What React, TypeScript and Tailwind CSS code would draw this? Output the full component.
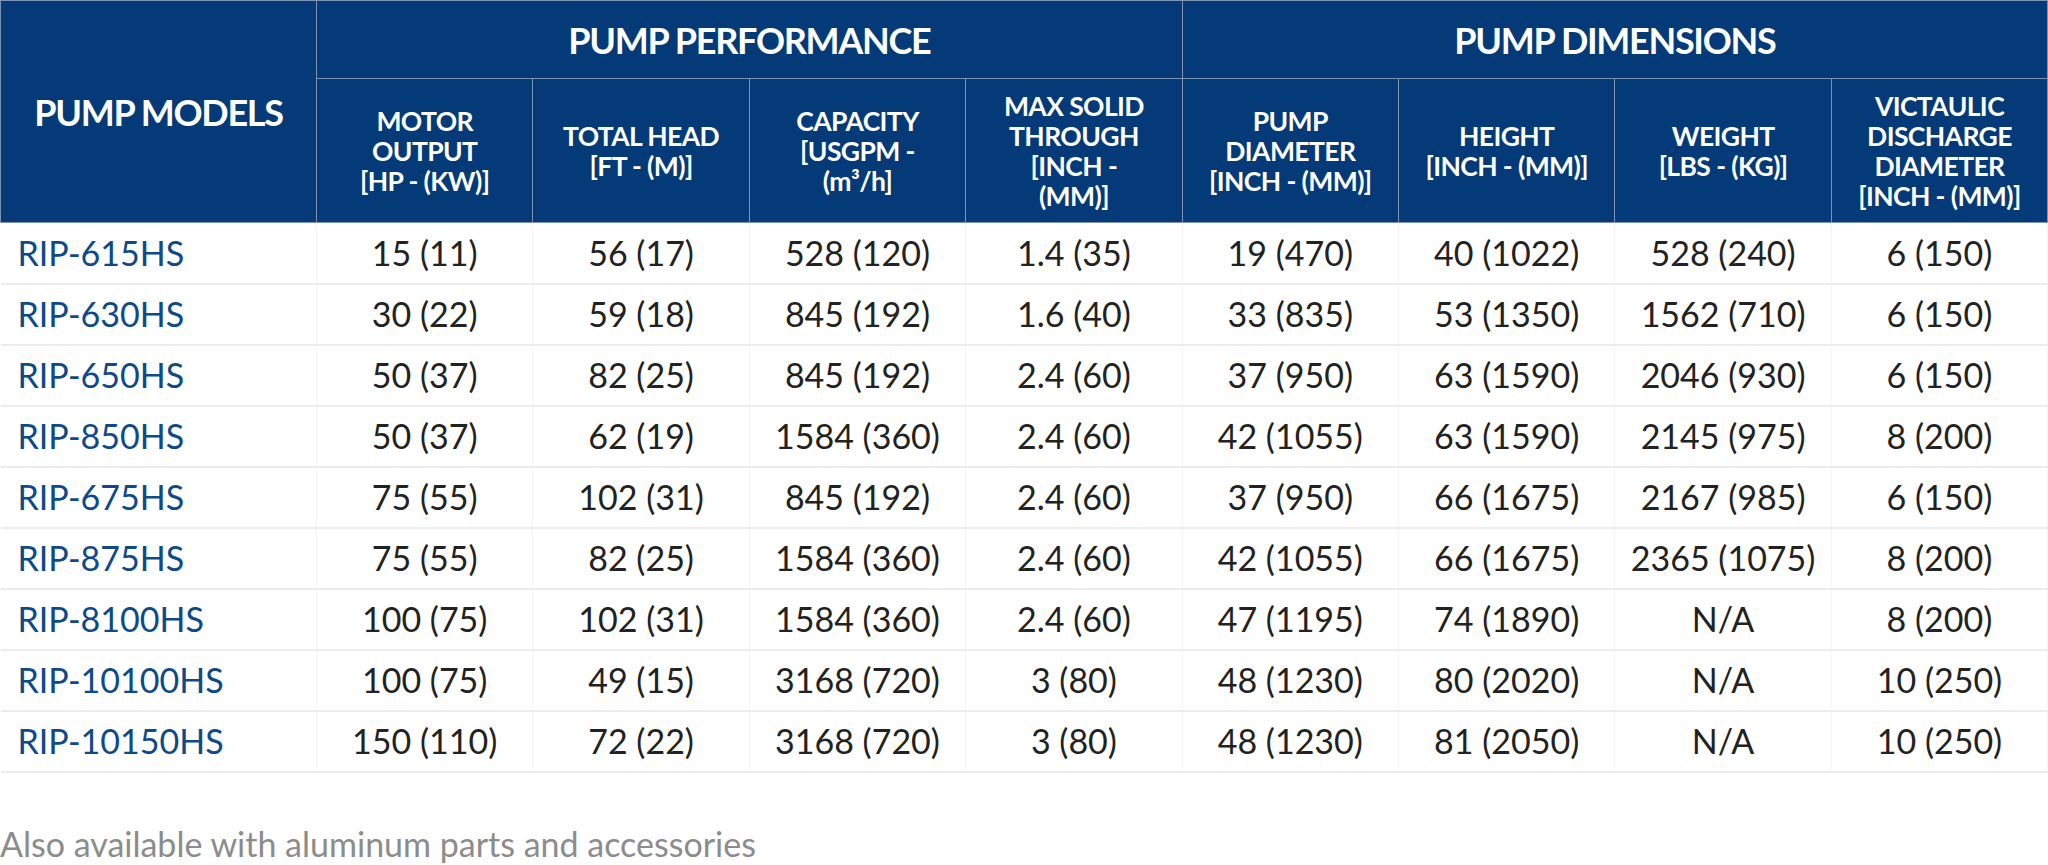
const subHeaders: string[][] = [
  ['MOTOR', 'OUTPUT', '[HP - (KW)]'],
  ['TOTAL HEAD', '[FT - (M)]'],
  ['CAPACITY', '[USGPM -', '(m³/h]'],
  ['MAX SOLID', 'THROUGH', '[INCH -', '(MM)]'],
  ['PUMP', 'DIAMETER', '[INCH - (MM)]'],
  ['HEIGHT', '[INCH - (MM)]'],
  ['WEIGHT', '[LBS - (KG)]'],
  ['VICTAULIC', 'DISCHARGE', 'DIAMETER', '[INCH - (MM)]'],
];

const rows: string[][] = [
  ['RIP-615HS', '15 (11)', '56 (17)', '528 (120)', '1.4 (35)', '19 (470)', '40 (1022)', '528 (240)', '6 (150)'],
  ['RIP-630HS', '30 (22)', '59 (18)', '845 (192)', '1.6 (40)', '33 (835)', '53 (1350)', '1562 (710)', '6 (150)'],
  ['RIP-650HS', '50 (37)', '82 (25)', '845 (192)', '2.4 (60)', '37 (950)', '63 (1590)', '2046 (930)', '6 (150)'],
  ['RIP-850HS', '50 (37)', '62 (19)', '1584 (360)', '2.4 (60)', '42 (1055)', '63 (1590)', '2145 (975)', '8 (200)'],
  ['RIP-675HS', '75 (55)', '102 (31)', '845 (192)', '2.4 (60)', '37 (950)', '66 (1675)', '2167 (985)', '6 (150)'],
  ['RIP-875HS', '75 (55)', '82 (25)', '1584 (360)', '2.4 (60)', '42 (1055)', '66 (1675)', '2365 (1075)', '8 (200)'],
  ['RIP-8100HS', '100 (75)', '102 (31)', '1584 (360)', '2.4 (60)', '47 (1195)', '74 (1890)', 'N/A', '8 (200)'],
  ['RIP-10100HS', '100 (75)', '49 (15)', '3168 (720)', '3 (80)', '48 (1230)', '80 (2020)', 'N/A', '10 (250)'],
  ['RIP-10150HS', '150 (110)', '72 (22)', '3168 (720)', '3 (80)', '48 (1230)', '81 (2050)', 'N/A', '10 (250)'],
];

const App = () => {
  return (
    <main className="w-[2048px] h-[865px] bg-white font-['Lato',sans-serif] overflow-hidden">
      <table className="w-[2047px] table-fixed border-collapse">
        <colgroup>
          <col className="w-[316px]" />
          {subHeaders.map((_, i) => (
            <col key={i} className="w-[216.4px]" />
          ))}
        </colgroup>
        <thead className="bg-[#043a78] text-white">
          <tr className="h-[78px]">
            <th
              rowSpan={2}
              className="border border-[#7f93b2] text-[36px] font-bold leading-none tracking-[-1.3px]"
            >
              PUMP MODELS
            </th>
            <th
              colSpan={4}
              className="border border-[#7f93b2] text-[36px] font-bold leading-none tracking-[-1.3px]"
            >
              PUMP PERFORMANCE
            </th>
            <th
              colSpan={4}
              className="border border-[#7f93b2] text-[36px] font-bold leading-none tracking-[-1.3px]"
            >
              PUMP DIMENSIONS
            </th>
          </tr>
          <tr className="h-[144px]">
            {subHeaders.map((lines, i) => (
              <th
                key={i}
                className="border border-[#7f93b2] px-1 text-[26.5px] font-bold leading-[30px] tracking-[-0.6px]"
              >
                {lines.map((l, j) => (
                  <div key={j}>{l}</div>
                ))}
              </th>
            ))}
          </tr>
        </thead>
        <tbody>
          {rows.map((r) => (
            <tr key={r[0]} className="h-[61px] border-b-2 border-[#ececec]">
              {r.map((c, i) => (
                <td
                  key={i}
                  className={
                    i === 0
                      ? 'border-r border-[#f4f4f4] pl-[17px] text-left text-[34px] leading-none text-[#0c4a8a]'
                      : 'border-r border-[#f4f4f4] text-center text-[34px] leading-none text-[#222222]'
                  }
                >
                  {c}
                </td>
              ))}
            </tr>
          ))}
        </tbody>
      </table>
      <p className="mt-[54px] text-[34px] leading-none text-[#8c8c8c]">
        Also available with aluminum parts and accessories
      </p>
    </main>
  );
};

export default App;
